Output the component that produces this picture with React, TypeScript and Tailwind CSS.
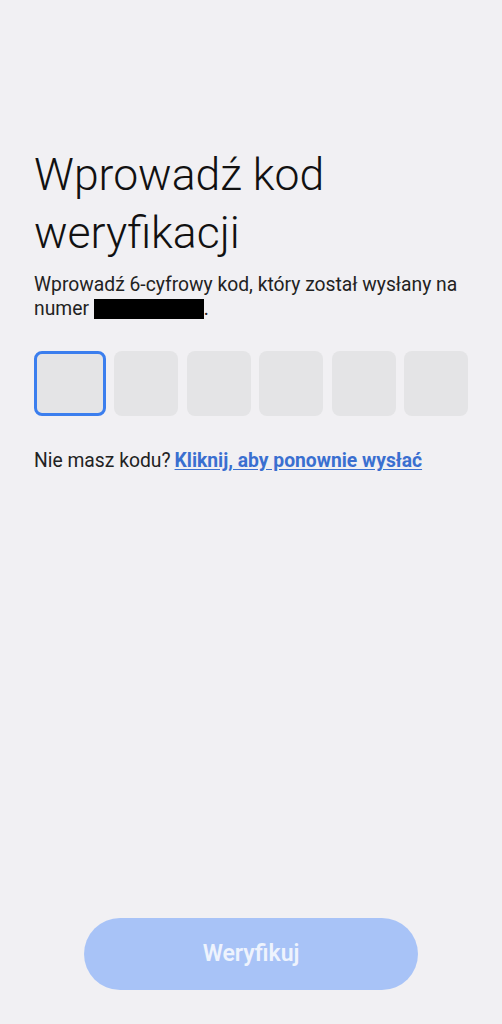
import { useState } from "react";

export default function App() {
  const [code] = useState(["", "", "", "", "", ""]);

  return (
    <div
      className="min-h-[1024px] w-full bg-[#f1f0f3] flex flex-col"
      style={{ fontFamily: "Roboto, 'Noto Sans', sans-serif" }}
    >
      <div className="px-[34px] pt-[146px]">
        <h1 className="text-[44.5px] leading-[58px] font-light text-[#111]">
          Wprowadź kod weryfikacji
        </h1>
        <p className="mt-[11px] text-[19.3px] leading-[24px] text-[#222]">
          Wprowadź 6-cyfrowy kod, który został wysłany na numer{" "}
          <span className="inline-block align-[-4px] w-[110px] h-[20px] bg-black" />.
        </p>

        <div className="mt-[30px] flex gap-[8.4px]">
          {code.map((c, i) => (
            <div
              key={i}
              className={
                i === 0
                  ? "w-[72px] h-[65px] rounded-[8px] bg-[#e4e4e6] border-[3px] border-[#3b7eee]"
                  : "w-[64px] h-[65px] rounded-[8px] bg-[#e4e4e6]"
              }
            >
              {c}
            </div>
          ))}
        </div>

        <p className="mt-[33px] text-[19.3px] leading-[24px] text-[#222]">
          Nie masz kodu?
          <a className="ml-[4px] font-bold text-[#3a6fd0] underline underline-offset-2" href="#">
            Kliknij, aby ponownie wysłać
          </a>
        </p>
      </div>

      <div className="flex-1" />

      <div className="flex justify-center pb-[34px]">
        <button className="w-[334px] h-[72px] rounded-full bg-[#a8c3f7] text-[#eef3fd] text-[23px] font-semibold">
          Weryfikuj
        </button>
      </div>
    </div>
  );
}
